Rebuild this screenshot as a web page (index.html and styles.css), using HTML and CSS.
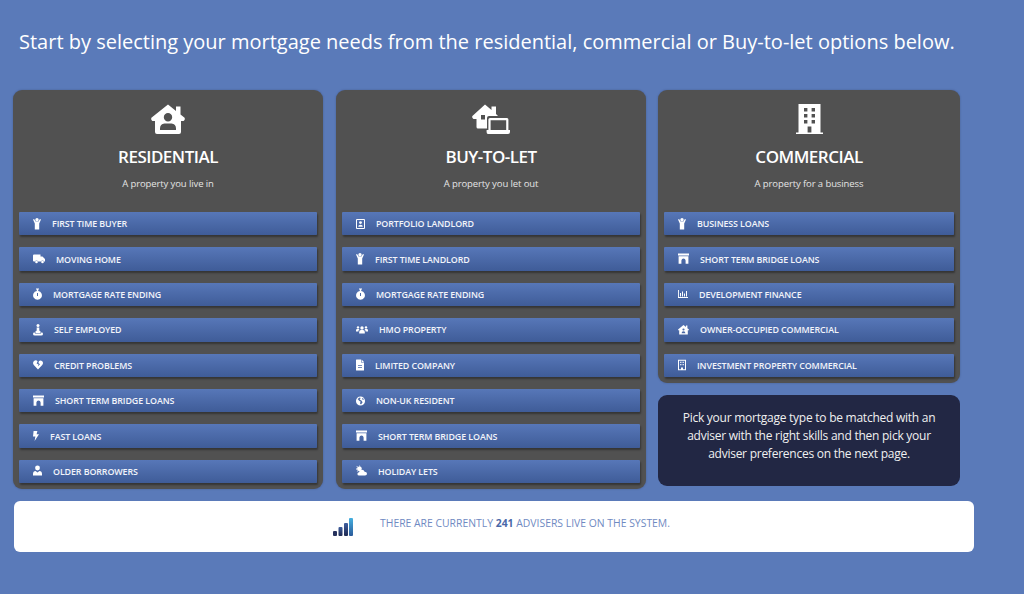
FILE: index.html
```html
<!DOCTYPE html>
<html lang="en">
<head>
    <meta charset="UTF-8">
    <title>Find a mortgage adviser</title>
    <link rel="stylesheet" href="styles.css">
</head>
<body>
    <svg class="sprite" xmlns="http://www.w3.org/2000/svg">
        <symbol id="shirt" viewBox="0 0 8 12"><circle cx="4" cy="1.8" r="1.7"/><path d="M0 1.6 L1.1 1 L2.6 3.6 H5.4 L6.9 1 L8 1.6 L6.2 5.4 V11.5 H1.8 V5.4 Z"/></symbol>
        <symbol id="truck" viewBox="0 0 12 12"><path d="M0 2.5 Q0 1.5 1 1.5 H7.5 V3.5 H9.5 L12 6 V8.5 H11 A1.6 1.6 0 0 0 8 8.5 H5 A1.6 1.6 0 0 0 2 8.5 H1 Q0 8.5 0 7.5 Z"/><circle cx="3.5" cy="9" r="1.3"/><circle cx="9.5" cy="9" r="1.3"/></symbol>
        <symbol id="watch" viewBox="0 0 9 12"><path fill-rule="evenodd" d="M3 .5 H6 V1.6 H5.2 V3 A4.4 4.4 0 1 1 3.8 3 V1.6 H3 Z M4 5 V8 H5 V5 Z"/></symbol>
        <symbol id="seated" viewBox="0 0 10 12"><circle cx="5" cy="1.6" r="1.5"/><path d="M3.7 3.5 H6.3 V6.5 L8 8 L7 9 H3 L2 8 L3.7 6.5 Z"/><path d="M0 10 Q0 8.5 1.5 8.3 L2 9.5 H8 L8.5 8.3 Q10 8.5 10 10 Q10 11.5 8 11.5 H2 Q0 11.5 0 10 Z"/></symbol>
        <symbol id="heart" viewBox="0 0 10 12"><path d="M5 10.5 L.8 6 Q-.8 3.6 1 2 Q3 .6 4.6 2.2 L3.6 4.4 L5.6 5.6 L4.8 7.6 L7 5.2 L5.4 4 L6 2 Q7.6 .8 9.2 2.2 Q10.8 3.8 9.2 6 Z"/></symbol>
        <symbol id="bridge" viewBox="0 0 11 12"><path d="M0 .6 H11 V2.4 H0 Z M.6 3.2 H10.4 V10.8 H7.6 V7.5 Q7.4 5.4 5.5 5.4 Q3.6 5.4 3.4 7.5 V10.8 H.6 Z"/></symbol>
        <symbol id="bolt" viewBox="0 0 6 12"><path d="M.6 1 L4.4 1 L3.6 4.2 L6 4.2 L1.6 11 L2.4 6.4 L0 6.4 Z"/></symbol>
        <symbol id="user" viewBox="0 0 9 12"><circle cx="4.5" cy="3" r="2.4"/><path d="M0 10.5 V9 Q0 6.2 2.6 6 L4.5 7.5 L6.4 6 Q9 6.2 9 9 V10.5 Z"/></symbol>
        <symbol id="contact" viewBox="0 0 9 12"><path fill-rule="evenodd" d="M0 2 Q0 1 1 1 H8 Q9 1 9 2 V10 Q9 11 8 11 H1 Q0 11 0 10 Z M1 2 V10 H8 V2 Z"/><circle cx="4.5" cy="4.6" r="1.4"/><path d="M2.2 8.8 Q2.2 6.8 4.5 6.8 Q6.8 6.8 6.8 8.8 Z"/></symbol>
        <symbol id="users" viewBox="0 0 12 12"><circle cx="6" cy="4" r="1.7"/><circle cx="2" cy="3.4" r="1.2"/><circle cx="10" cy="3.4" r="1.2"/><path d="M3.2 9.5 V8 Q3.2 6 5 6 H7 Q8.8 6 8.8 8 V9.5 Z M0 7.5 V6.2 Q0 5 1.2 5 H3 L3.4 5.6 Q2.4 6.2 2.4 7.5 Z M12 7.5 V6.2 Q12 5 10.8 5 H9 L8.6 5.6 Q9.6 6.2 9.6 7.5 Z"/></symbol>
        <symbol id="file" viewBox="0 0 8 12"><path fill-rule="evenodd" d="M0 1 Q0 .5 .5 .5 H5 V3.5 H8 V11 Q8 11.5 7.5 11.5 H.5 Q0 11.5 0 11 Z M2 6 V6.7 H6 V6 Z M2 8 V8.7 H6 V8 Z M5.6 .5 L8 2.9 H5.6 Z"/></symbol>
        <symbol id="globe" viewBox="0 0 9 12"><path fill-rule="evenodd" d="M4.5 1.5 A4.5 4.5 0 1 1 4.5 10.5 A4.5 4.5 0 1 1 4.5 1.5 Z M1.6 4 L3.4 6 L4.6 6.4 L4 8.6 L5 9.4 L6.6 7.2 L5.4 5.4 L3.6 4.6 L4.8 3 L3.6 2.6 Z M6.4 3 L6 4.2 L7.8 5 L7.4 3.6 Z"/></symbol>
        <symbol id="cloud" viewBox="0 0 11 12"><circle cx="3.4" cy="3.8" r="2.4"/><path d="M.5 .8 L1.8 1.6 L1 2.6 Z M0 3.4 H1 V4.4 H0 Z M3.6 .2 L4.6 1.4 H3 Z M.6 6.6 L1.6 5.4 L2.4 6.2 Z"/><path d="M3.2 10.6 Q1.4 10.6 1.4 8.9 Q1.4 7.4 3 7.2 Q3.6 4.8 6 4.8 Q8 4.8 8.6 6.8 Q11 7 11 8.8 Q11 10.6 9 10.6 Z"/></symbol>
        <symbol id="chart" viewBox="0 0 10 12"><path d="M0 2 H.9 V9.1 H10 V10 H0 Z M2 5 H3 V8.4 H2 Z M4 3.4 H5 V8.4 H4 Z M6 5.4 H7 V8.4 H6 Z M8 3 H9 V8.4 H8 Z"/></symbol>
        <symbol id="home-user" viewBox="0 0 11 12"><path fill-rule="evenodd" d="M5.5 1 L8 3 V1.6 H9.4 V4.2 L11 5.6 L10.4 6.6 L9.8 6.2 V10.5 H1.2 V6.2 L.6 6.6 L0 5.6 Z M5.5 4.4 A1.1 1.1 0 1 0 5.5 6.6 A1.1 1.1 0 1 0 5.5 4.4 Z M3.6 9.2 H7.4 Q7.4 7.2 5.5 7.2 Q3.6 7.2 3.6 9.2 Z"/></symbol>
        <symbol id="office" viewBox="0 0 8 12"><path fill-rule="evenodd" d="M0 .8 H8 V11.2 H0 Z M1 1.8 V10.2 H3 V8.4 H5 V10.2 H7 V1.8 Z M2.2 2.8 H3.4 V4 H2.2 Z M4.6 2.8 H5.8 V4 H4.6 Z M2.2 5 H3.4 V6.2 H2.2 Z M4.6 5 H5.8 V6.2 H4.6 Z"/></symbol>
    </svg>

    <h1 class="intro">Start by selecting your mortgage needs from the residential, commercial or Buy-to-let options below.</h1>

    <div class="columns">
        <section class="card">
            <div class="card-head">
                <svg class="card-icon" width="34" height="30" viewBox="0 0 34 30"><path fill-rule="evenodd" d="M17 .5 L25 7 V2.5 H29.5 V10.5 L33.6 13.8 Q34.4 16 32.6 17 H30 V28 Q30 30 28 30 H6 Q4 30 4 28 V17 H1.4 Q-.4 16 .4 13.8 Z M17 9 A4.2 4.2 0 1 0 17 17.4 A4.2 4.2 0 1 0 17 9 Z M9 26 H25 V24.5 Q25 19.6 20.5 19.4 H13.5 Q9 19.6 9 24.5 Z"/></svg>
                <h2>RESIDENTIAL</h2>
                <p>A property you live in</p>
            </div>
            <div class="options">
                <a class="option"><svg width="8" height="12"><use href="#shirt"/></svg>First time buyer</a>
                <a class="option"><svg width="12" height="12"><use href="#truck"/></svg>Moving home</a>
                <a class="option"><svg width="9" height="12"><use href="#watch"/></svg>Mortgage rate ending</a>
                <a class="option"><svg width="10" height="12"><use href="#seated"/></svg>Self employed</a>
                <a class="option"><svg width="10" height="12"><use href="#heart"/></svg>Credit problems</a>
                <a class="option"><svg width="11" height="12"><use href="#bridge"/></svg>Short term bridge loans</a>
                <a class="option"><svg width="6" height="12"><use href="#bolt"/></svg>Fast loans</a>
                <a class="option"><svg width="9" height="12"><use href="#user"/></svg>Older borrowers</a>
            </div>
        </section>

        <section class="card">
            <div class="card-head">
                <svg class="card-icon" width="38" height="30" viewBox="0 0 38 30"><path fill-rule="evenodd" d="M13 .5 L19.5 6 V2.5 H24 V10 L26 12 H17 Q15 12 15 14 V24.5 H6 Q4.5 24.5 4.5 23 V15 H1.5 Q-.4 14 .4 12 Z M9 11 V15.5 H13 V11 Z"/><path fill-rule="evenodd" d="M18 14 H35 Q36.4 14 36.4 15.5 V26 H38 V28 Q38 30 36 30 H16 Q14.6 30 14.6 28 V26 H16.4 V15.5 Q16.4 14 18 14 Z M18.6 16.2 V26 H34.2 V16.2 Z"/></svg>
                <h2>BUY-TO-LET</h2>
                <p>A property you let out</p>
            </div>
            <div class="options">
                <a class="option"><svg width="9" height="12"><use href="#contact"/></svg>Portfolio landlord</a>
                <a class="option"><svg width="8" height="12"><use href="#shirt"/></svg>First time landlord</a>
                <a class="option"><svg width="9" height="12"><use href="#watch"/></svg>Mortgage rate ending</a>
                <a class="option"><svg width="12" height="12"><use href="#users"/></svg>HMO property</a>
                <a class="option"><svg width="8" height="12"><use href="#file"/></svg>Limited company</a>
                <a class="option"><svg width="9" height="12"><use href="#globe"/></svg>Non-UK resident</a>
                <a class="option"><svg width="11" height="12"><use href="#bridge"/></svg>Short term bridge loans</a>
                <a class="option"><svg width="11" height="12"><use href="#cloud"/></svg>Holiday lets</a>
            </div>
        </section>

        <div class="side">
            <section class="card">
                <div class="card-head">
                    <svg class="card-icon" width="27" height="30" viewBox="0 0 27 30"><path fill-rule="evenodd" d="M2.5 0 H24.5 V28.5 H27 V30 H0 V28.5 H2.5 Z M8 4 V7.4 H11.4 V4 Z M15.6 4 V7.4 H19 V4 Z M8 10 V13.4 H11.4 V10 Z M15.6 10 V13.4 H19 V10 Z M8 16 V19.4 H11.4 V16 Z M15.6 16 V19.4 H19 V16 Z M11.6 22.5 V28.5 H15.4 V22.5 Z"/></svg>
                    <h2>COMMERCIAL</h2>
                    <p>A property for a business</p>
                </div>
                <div class="options">
                    <a class="option"><svg width="8" height="12"><use href="#shirt"/></svg>Business loans</a>
                    <a class="option"><svg width="11" height="12"><use href="#bridge"/></svg>Short term bridge loans</a>
                    <a class="option"><svg width="10" height="12"><use href="#chart"/></svg>Development finance</a>
                    <a class="option"><svg width="11" height="12"><use href="#home-user"/></svg>Owner-occupied commercial</a>
                    <a class="option"><svg width="8" height="12"><use href="#office"/></svg>Investment property commercial</a>
                </div>
            </section>
            <div class="notice">Pick your mortgage type to be matched with an adviser with the right skills and then pick your adviser preferences on the next page.</div>
        </div>
    </div>

    <div class="live-bar">
        <svg width="20" height="20" viewBox="0 0 20 20">
            <defs>
                <linearGradient id="barDark" x1="0" y1="0" x2="0" y2="1"><stop offset="0" stop-color="#3f5f9f"/><stop offset="1" stop-color="#1f2a52"/></linearGradient>
                <linearGradient id="barLight" x1="0" y1="0" x2="0" y2="1"><stop offset="0" stop-color="#45b0e0"/><stop offset="1" stop-color="#2a5a9a"/></linearGradient>
            </defs>
            <rect x="0" y="14" width="4" height="5" rx="1" fill="#26315c"/>
            <rect x="5.5" y="10" width="4" height="9" rx="1" fill="url(#barDark)"/>
            <rect x="11" y="6" width="4" height="13" rx="1" fill="url(#barDark)"/>
            <rect x="16" y="1" width="4" height="18" rx="1" fill="url(#barLight)"/>
        </svg>
        <span class="live-text">THERE ARE CURRENTLY <b>241</b> ADVISERS LIVE ON THE SYSTEM.</span>
    </div>
</body>
</html>
```

FILE: styles.css
```css
* {
    box-sizing: border-box;
    margin: 0;
    padding: 0;
}

body {
    background-color: #5a7ab9;
    font-family: "Open Sans", "Noto Sans", sans-serif;
    color: #fff;
    padding: 0 13px;
    min-height: 100vh;
}

.sprite {
    display: none;
}

.intro {
    font-size: 20px;
    font-weight: 400;
    line-height: 28px;
    padding: 28px 0 33.5px 6px;
    white-space: nowrap;
}

.columns {
    display: flex;
    gap: 13px;
    align-items: flex-start;
}

.card {
    width: 310px;
    background: #515151;
    border-radius: 9px;
    padding: 0 6px 6px;
    box-shadow: 0 0 2px rgba(40,50,80,0.4);
}

.card-head {
    height: 122.5px;
    padding-top: 14px;
    display: flex;
    flex-direction: column;
    align-items: center;
}

.card-icon {
    fill: #fff;
    display: block;
}

.card-head h2 {
    font-size: 17px;
    font-weight: 600;
    letter-spacing: -0.5px;
    line-height: 22px;
    margin-top: 12px;
}

.card-head p {
    font-size: 9.5px;
    letter-spacing: -0.1px;
    color: #e4e4e4;
    line-height: 14px;
    margin-top: 9px;
}

.options {
    display: flex;
    flex-direction: column;
    gap: 12px;
}

.option {
    display: flex;
    align-items: center;
    gap: 11px;
    height: 23.4px;
    padding-left: 14px;
    background: linear-gradient(#5777b8, #3f5c98);
    box-shadow: 1px 2px 2px rgba(0,0,0,0.35);
    border-radius: 1px;
    font-size: 8.9px;
    font-weight: 600;
    letter-spacing: -0.1px;
    color: #f2f4fa;
    text-transform: uppercase;
    white-space: nowrap;
}

.option svg {
    fill: #fff;
    flex: none;
}

.side {
    width: 302px;
    margin-left: -1px;
    display: flex;
    flex-direction: column;
    gap: 12px;
}

.side .card {
    width: 100%;
}

.notice {
    background: #222744;
    border-radius: 9px;
    height: 91px;
    padding: 14px 20px;
    font-size: 12px;
    letter-spacing: -0.25px;
    line-height: 18px;
    text-align: center;
    color: #f0f0f0;
}

.live-bar {
    width: 960px;
    height: 51px;
    margin: 12px 0 0 1px;
    padding-left: 319px;
    background: #fff;
    border-radius: 6px;
    display: flex;
    align-items: center;
    gap: 27px;
}

.live-text {
    font-size: 10.4px;
    color: #6f8ac2;
    margin-top: -8px;
    white-space: nowrap;
}

.live-text b {
    color: #4a68a8;
}
```
